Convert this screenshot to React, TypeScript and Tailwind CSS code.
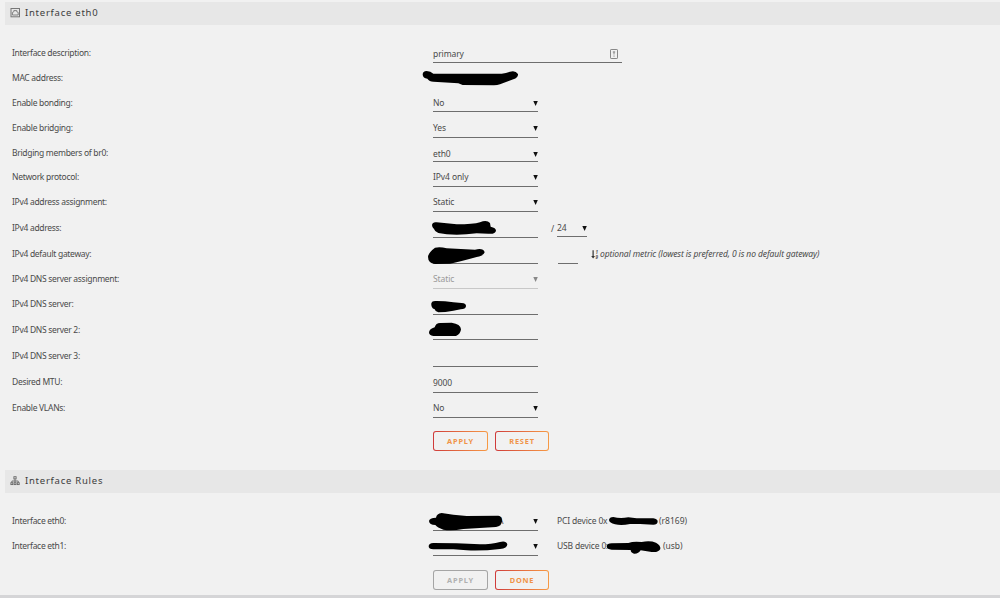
import React from "react";
import clsx from "clsx";

interface MaskProps {
  className: string;
  viewBox: string;
  d: string;
}

// Black marker stroke that hides a private value
function Mask({ className, viewBox, d }: MaskProps) {
  return (
    <svg className={clsx("absolute max-w-none", className)} viewBox={viewBox}>
      <path d={d} fill="#000" />
    </svg>
  );
}

function Arrow({ className = "" }: { className?: string }) {
  return (
    <svg
      className={clsx("h-[5px] w-[5px] shrink-0", className)}
      viewBox="0 0 5 5"
    >
      <path d="M0.3 0h4.5L2.6 5z" fill="currentColor" />
    </svg>
  );
}

function PortIcon() {
  return (
    <svg
      className="h-[10px] w-[10px]"
      viewBox="0 0 10 10"
      fill="none"
      stroke="#777"
    >
      <rect x="1" y="0.5" width="8.5" height="8.3" strokeWidth="1" />
      <path
        d="M2.4 7V4.4L3.8 3.8V2.6h3v1.2l1.4 0.6V7z"
        strokeWidth="0.9"
      />
    </svg>
  );
}

function SitemapIcon() {
  return (
    <svg
      className="h-[10px] w-[10px]"
      viewBox="0 0 10 10"
      fill="none"
      stroke="#666"
      strokeWidth="0.9"
    >
      <rect x="3.9" y="0.7" width="2.2" height="2.2" />
      <path d="M5 3.1v3.4M1.9 6.5V5h6.3v1.5" />
      <rect x="0.9" y="6.7" width="1.9" height="1.9" />
      <rect x="4.1" y="6.7" width="1.9" height="1.9" />
      <rect x="7.3" y="6.7" width="1.9" height="1.9" />
    </svg>
  );
}

function SortIcon() {
  return (
    <svg className="h-[9px] w-[8px]" viewBox="0 0 8 9">
      <path d="M1.5 0.3h1.2v5.8h1.3L2.1 8.5 0.2 6.1h1.3z" fill="#333" />
      <text x="4.6" y="4" fontSize="4.6" fontWeight="700" fill="#555">
        1
      </text>
      <text x="4.6" y="8.5" fontSize="4.6" fontWeight="700" fill="#555">
        9
      </text>
    </svg>
  );
}

function SectionTitle({
  icon,
  children,
}: {
  icon: React.ReactNode;
  children: React.ReactNode;
}) {
  return (
    <h2 className="ml-[5px] flex h-[23px] items-center gap-[5px] bg-[#e7e7e7] pb-px pl-[5px] text-[9.5px] tracking-[0.75px] text-[#3c3c3c]">
      {icon}
      <span>{children}</span>
    </h2>
  );
}

interface RowProps {
  label: string;
  height: string;
  labelHeight?: string;
  field?: string;
  value?: string;
  select?: boolean;
  disabled?: boolean;
  mask?: React.ReactNode;
  children?: React.ReactNode;
}

function Row({
  label,
  height,
  labelHeight = "h-5",
  field = "w-[105px] border-b",
  value,
  select,
  disabled,
  mask,
  children,
}: RowProps) {
  return (
    <div className={clsx("flex items-end pl-3", height)}>
      <div
        className={clsx(
          "w-[421px] shrink-0 leading-[19px] tracking-[-0.3px]",
          labelHeight,
        )}
      >
        {label}
      </div>
      <div
        className={clsx(
          "relative flex h-[18px] shrink-0 items-center justify-between",
          field,
          disabled ? "border-[#c8c8c8] text-[#999]" : "border-[#6e6e6e]",
        )}
      >
        <span>{value}</span>
        {select && (
          <Arrow className={disabled ? "text-[#888]" : "text-[#111]"} />
        )}
        {mask}
      </div>
      {children}
    </div>
  );
}

function Button({
  width,
  disabled,
  children,
}: {
  width: string;
  disabled?: boolean;
  children: React.ReactNode;
}) {
  return (
    <button
      type="button"
      className={clsx(
        "h-5 rounded-[3px] p-px",
        width,
        disabled
          ? "bg-[#a5a5a5] text-[#b0b0b0]"
          : "bg-linear-to-r from-[#cf3a3a] to-[#f79a45] text-[#f09347]",
      )}
    >
      <span className="flex h-full items-center justify-center rounded-[2px] bg-[#f1f1f1] pt-px text-[7.4px] font-bold tracking-[0.8px]">
        {children}
      </span>
    </button>
  );
}

export default function App() {
  return (
    <div className="flex h-[598px] w-[1000px] flex-col overflow-hidden bg-[#f1f1f1] pt-[2px] font-['Noto_Sans',sans-serif] text-[8.5px] tracking-[-0.1px] text-[#4a4a4a]">
      <SectionTitle icon={<PortIcon />}>Interface eth0</SectionTitle>

      <Row
        label="Interface description:"
        height="h-[38px]"
        field="w-[189px] border-b pr-1 pt-px"
        value="primary"
        mask={
          <svg
            className="h-[10px] w-[8px]"
            viewBox="0 0 8 10"
            fill="none"
            stroke="#888"
          >
            <rect x="0.5" y="0.5" width="7" height="9" rx="0.6" />
            <path d="M4 2.5v3M4 6.5v1.2M2.8 3h2.4" />
          </svg>
        }
      />
      <Row
        label="MAC address:"
        height="h-[24px]"
        labelHeight="h-[19px]"
        field="w-[105px]"
        mask={
          <Mask
            className="bottom-px left-[-13px] h-4 w-[100px]"
            viewBox="0 90 300 48"
            d="M8 104Q8 93 20 93Q32 94 40 101H245Q258 99 270 95Q286 90 294 102Q295 112 280 118L240 133Q232 136 222 136L128 135L115 130L40 125Q28 125 22 116Q9 114 8 104Z"
          />
        }
      />
      <Row
        label="Enable bonding:"
        height="h-[25px]"
        labelHeight="h-[19px]"
        field="w-[105px] border-b pt-[2px]"
        value="No"
        select
      />
      <Row label="Enable bridging:" height="h-[26px]" value="Yes" select />
      <Row
        label="Bridging members of br0:"
        height="h-[24px]"
        labelHeight="h-[19px]"
        field="w-[105px] border-b pt-[3px]"
        value="eth0"
        select
      />
      <Row
        label="Network protocol:"
        height="h-[25px]"
        value="IPv4 only"
        select
      />
      <Row
        label="IPv4 address assignment:"
        height="h-[25px]"
        value="Static"
        select
      />
      <Row
        label="IPv4 address:"
        height="h-[26px]"
        mask={
          <Mask
            className="bottom-px left-[-13px] h-[17px] w-[80px]"
            viewBox="0 162 240 51"
            d="M36 180Q38 170 50 172L110 178Q160 178 180 172Q200 163 210 174L212 185Q228 188 228 197Q226 208 205 206L170 205Q120 212 80 208L55 204Q44 200 42 192Q36 188 36 180Z"
          />
        }
      >
        <span className="mb-px ml-[13px] h-[18px] w-[6px] leading-[19px]">
          /
        </span>
        <div className="mb-px flex h-[18px] w-[30px] items-center justify-between border-b border-[#6e6e6e] pt-[2px]">
          <span>24</span>
          <Arrow className="text-[#111]" />
        </div>
      </Row>
      <Row
        label="IPv4 default gateway:"
        height="h-[26px]"
        mask={
          <Mask
            className="bottom-[-2px] left-[-13px] h-5 w-[70px]"
            viewBox="0 240 210 60"
            d="M24 275Q26 262 45 248Q60 244 80 250L165 254Q190 248 194 262Q192 272 170 276Q120 290 90 296L45 297Q24 294 24 275Z"
          />
        }
      >
        <div className="ml-5 h-[18px] w-5 border-b border-[#6e6e6e]" />
        <div className="mb-px ml-[13px] flex h-[18px] items-center gap-px tracking-[-0.1px] italic">
          <SortIcon />
          <span className="whitespace-nowrap">
            optional metric (lowest is preferred, 0 is no default gateway)
          </span>
        </div>
      </Row>
      <Row
        label="IPv4 DNS server assignment:"
        height="h-[25px]"
        value="Static"
        select
        disabled
      />
      <Row
        label="IPv4 DNS server:"
        height="h-[26px]"
        labelHeight="h-[21px]"
        mask={
          <Mask
            className="bottom-0 left-[-13px] h-[15px] w-[50px]"
            viewBox="0 27 150 45"
            d="M34 40Q36 31 50 33L75 34Q100 38 125 39Q139 40 138 49Q137 58 122 58L100 62Q75 67 55 67Q46 66 44 58Q32 54 34 40Z"
          />
        }
      />
      <Row
        label="IPv4 DNS server 2:"
        height="h-[25px]"
        mask={
          <Mask
            className="bottom-[2px] left-[-13px] h-[15px] w-[50px]"
            viewBox="0 96 150 45"
            d="M27 127Q28 117 44 112Q48 98 62 99L95 98Q122 102 123 118Q122 132 108 138L40 138Q27 137 27 127Z"
          />
        }
      />
      <Row
        label="IPv4 DNS server 3:"
        height="h-[27px]"
        labelHeight="h-[21px]"
      />
      <Row
        label="Desired MTU:"
        height="h-[26px]"
        labelHeight="h-[21px]"
        value="9000"
      />
      <Row label="Enable VLANs:" height="h-[25px]" value="No" select />

      <div className="mt-[13px] flex gap-[7px] pl-[433px]">
        <Button width="w-[55px]">APPLY</Button>
        <Button width="w-[54px]">RESET</Button>
      </div>

      <div className="mt-[19px]">
        <SectionTitle icon={<SitemapIcon />}>Interface Rules</SectionTitle>
      </div>

      <Row
        label="Interface eth0:"
        height="h-[38px]"
        value=""
        select
        mask={
          <>
            <span className="absolute left-[65px]">A</span>
            <Mask
              className="bottom-[-1px] left-[-13px] h-[19px] w-[90px]"
              viewBox="0 21 270 57"
              d="M27 48Q28 39 48 38Q50 26 65 24L100 29L140 33L235 32Q247 34 246 48Q245 64 228 66L130 72Q95 78 70 74Q52 68 46 60Q28 60 27 48Z"
            />
          </>
        }
      >
        <div className="relative mb-px ml-[19px] flex h-[18px] items-center">
          <span className="w-[102px] tracking-[-0.15px]">PCI device 0x</span>
          <span className="tracking-normal">(r8169)</span>
          <Mask
            className="top-[4px] left-[52px] h-[10px] w-[50px]"
            viewBox="567 33 150 30"
            d="M567 45Q568 36 580 36Q600 42 625 37L650 40L700 40Q713 42 713 50Q712 59 700 59L660 57L630 57Q605 62 585 58Q568 54 567 45Z"
          />
        </div>
      </Row>
      <Row
        label="Interface eth1:"
        height="h-[25px]"
        value=""
        select
        mask={
          <Mask
            className="bottom-[3px] left-[-13px] h-3 w-[90px]"
            viewBox="0 105 270 36"
            d="M26 124Q26 115 40 114L110 115L180 118Q215 118 240 111Q258 106 262 118Q262 130 240 132Q190 138 140 136L100 133L40 133Q26 133 26 124Z"
          />
        }
      >
        <div className="relative mb-px ml-[19px] flex h-[18px] items-center">
          <span className="w-[106px] tracking-[-0.15px]">USB device 0x</span>
          <span className="tracking-normal">(usb)</span>
          <Mask
            className="top-[3px] left-[49px] h-[15px] w-[55px]"
            viewBox="558 105 165 45"
            d="M560 124Q561 115 575 115L625 114Q640 108 665 111Q690 106 708 113Q723 122 721 132Q716 143 695 141L662 136Q655 147 642 146Q632 143 632 135L575 134Q561 134 560 124Z"
          />
        </div>
      </Row>

      <div className="mt-[14px] flex gap-[7px] pl-[433px]">
        <Button width="w-[55px]" disabled>
          APPLY
        </Button>
        <Button width="w-[54px]">DONE</Button>
      </div>

      <div className="mt-auto h-[3px] shrink-0 bg-[#d5d5d7]" />
    </div>
  );
}
